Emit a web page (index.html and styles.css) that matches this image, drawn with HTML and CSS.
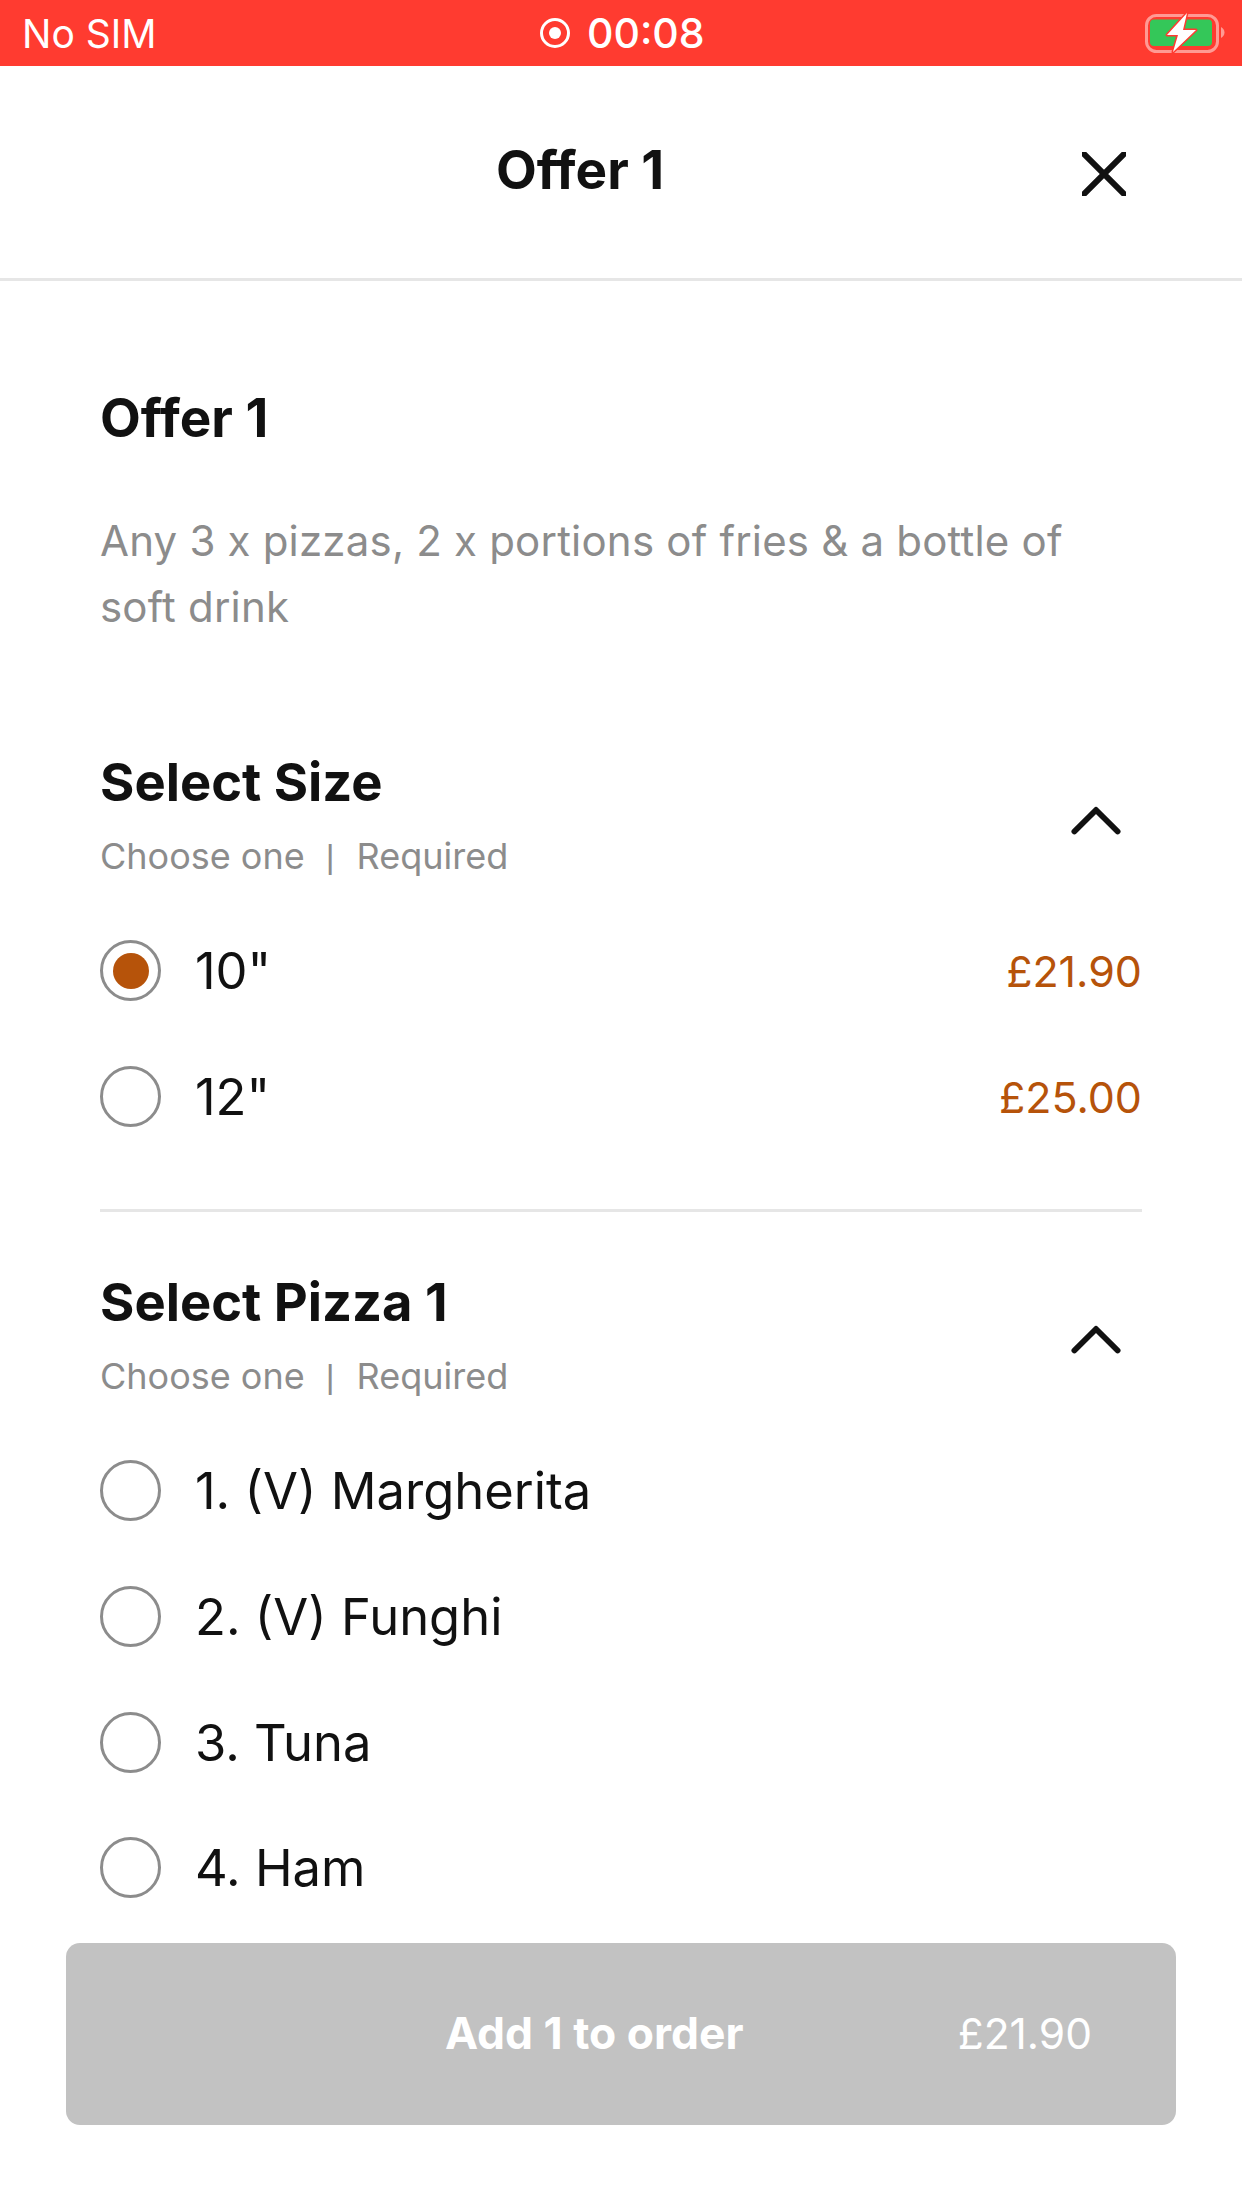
FILE: index.html
```html
<!DOCTYPE html>
<html lang="en">
<head>
<meta charset="utf-8">
<title>Offer 1</title>
<link rel="stylesheet" href="styles.css">
</head>
<body>
<div class="screen">
  <div class="status">
    <span class="carrier">No SIM</span>
    <span class="clock">
      <svg class="rec" viewBox="0 0 32 32"><circle cx="16" cy="16" r="13.5" fill="none" stroke="#fff" stroke-width="3"/><circle cx="16" cy="16" r="6" fill="#fff"/></svg>
      00:08
    </span>
    <svg class="battery" viewBox="0 0 122 66">
      <rect x="26.500" y="15.500" width="71" height="36" rx="10" fill="none" stroke="#ff9a94" stroke-width="3"/>
      <rect x="30" y="19.500" width="62" height="26.500" rx="4" fill="#34c759"/>
      <path d="M101 27v11c2-1 3.500-3 3.500-5.500s-1.500-4.500-3.500-5.500z" fill="#ff9a94"/>
      <path d="M67 13L47 35h11l-5 17 23-22H63z" fill="#fff" stroke="#ff3b30" stroke-width="3" stroke-linejoin="round" paint-order="stroke"/>
    </svg>
  </div>
  <header class="topbar">
    <h1 class="topbar-title">Offer 1</h1>
    <svg class="close" viewBox="0 0 44 44"><path d="M2 2l40 40M42 2L2 42" stroke="#111" stroke-width="6" stroke-linecap="round"/></svg>
  </header>
  <main class="content">
    <h2 class="offer-title">Offer 1</h2>
    <p class="desc">Any 3 x pizzas, 2 x portions of fries &amp; a bottle of soft drink</p>
    <section class="group first">
      <div class="group-head">
        <div>
          <h3 class="group-title">Select Size</h3>
          <p class="group-sub">Choose one<span class="pipe">|</span>Required</p>
        </div>
        <svg class="chev" viewBox="0 0 52 30"><path d="M3.500 26.500L26 4l22.500 22.500" fill="none" stroke="#111" stroke-width="6" stroke-linecap="round" stroke-linejoin="round"/></svg>
      </div>
      <div class="row"><span class="radio on"></span><span class="label">10"</span><span class="price">£21.90</span></div>
      <div class="row"><span class="radio"></span><span class="label">12"</span><span class="price">£25.00</span></div>
    </section>
    <section class="group">
      <div class="group-head">
        <div>
          <h3 class="group-title">Select Pizza 1</h3>
          <p class="group-sub">Choose one<span class="pipe">|</span>Required</p>
        </div>
        <svg class="chev" viewBox="0 0 52 30"><path d="M3.500 26.500L26 4l22.500 22.500" fill="none" stroke="#111" stroke-width="6" stroke-linecap="round" stroke-linejoin="round"/></svg>
      </div>
      <div class="row"><span class="radio"></span><span class="label">1. (V) Margherita</span></div>
      <div class="row"><span class="radio"></span><span class="label">2. (V) Funghi</span></div>
      <div class="row"><span class="radio"></span><span class="label">3. Tuna</span></div>
      <div class="row"><span class="radio"></span><span class="label">4. Ham</span></div>
    </section>
  </main>
  <div class="cta">
    <span class="cta-label">Add 1 to order</span>
    <span class="cta-price">£21.90</span>
  </div>
</div>
</body>
</html>
```
FILE: styles.css
```css
* { box-sizing: border-box; margin: 0; padding: 0; }
html, body { width: 1242px; height: 2208px; overflow: hidden; background: #fff; }
body { font-family: Inter, "Liberation Sans", sans-serif; color: #111; }
.screen { width: 1242px; height: 2208px; display: flex; flex-direction: column; position: relative; overflow: hidden; }
.status { height: 66px; flex: none; background: #ff3b30; color: #fff; display: flex; align-items: center; justify-content: space-between; padding: 0 0 0 22px; font-size: 39px; position: relative; }
.carrier { font-weight: 400; }
.clock { position: absolute; left: 539px; top: 0; height: 66px; display: flex; align-items: center; gap: 16px; font-weight: 500; font-size: 41px; }
.rec { width: 32px; height: 32px; }
.battery { width: 122px; height: 66px; }
.topbar { height: 215px; flex: none; border-bottom: 3px solid #e6e6e6; display: flex; align-items: center; justify-content: center; position: relative; padding-bottom: 4px; padding-right: 82px; }
.topbar-title { font-size: 53px; font-weight: 700; line-height: 60px; }
.close { position: absolute; left: 1082px; top: 86px; width: 44px; height: 44px; }
.content { padding: 107px 100px 0; flex: 1; min-height: 0; overflow: hidden; }
.offer-title { font-size: 53px; font-weight: 700; line-height: 60px; }
.desc { font-size: 42px; letter-spacing: 0.2px; line-height: 66px; color: #8c8c8c; margin-top: 60px; max-width: 1000px; }
.group { border-top: 3px solid #e6e6e6; padding-top: 60px; }
.group.first { border-top: 0; margin-top: 112px; padding-top: 0; padding-bottom: 49px; }
.group-head { display: flex; justify-content: space-between; align-items: center; padding-right: 21px; margin-bottom: 30px; }
.group-title { font-size: 52.500px; font-weight: 700; line-height: 60px; }
.group-sub { font-size: 36px; line-height: 44px; color: #8c8c8c; margin-top: 22px; display: flex; align-items: center; }
.pipe { font-family: "Liberation Sans", sans-serif; font-size: 34px; margin: 0 22px 0 21px; }
.chev { width: 50px; height: 29px; margin-top: 10px; }
.row { height: 125.800px; display: flex; align-items: center; gap: 34px; }
.radio { width: 61px; height: 61px; border: 3px solid #8c8c8c; border-radius: 50%; flex: none; display: flex; align-items: center; justify-content: center; }
.radio.on::after { content: ""; width: 36px; height: 36px; border-radius: 50%; background: #b6530a; }
.label { font-size: 50.700px; flex: 1; }
.price { font-size: 43px; color: #b6530a; }
.cta { position: absolute; left: 66px; top: 1943px; width: 1110px; height: 182px; background: #c2c2c2; border-radius: 14px; color: #fff; display: flex; align-items: center; padding-left: 379px; padding-bottom: 2px; }
.cta-label { font-size: 44.400px; font-weight: 700; }
.cta-price { font-size: 42.500px; position: absolute; right: 84px; }
```
